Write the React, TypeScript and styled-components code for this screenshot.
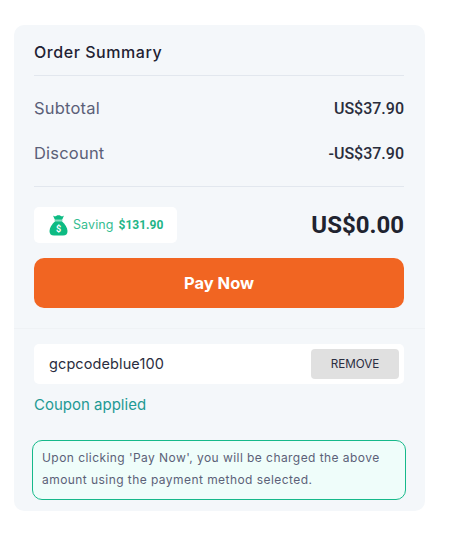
import React from "react";
import styled, { createGlobalStyle } from "styled-components";

const Global = createGlobalStyle`
  html, body { margin: 0; padding: 0; background: #fff; }
  body { font-family: "Inter", "Open Sans", sans-serif; }
`;
const sans = `"Inter", "Open Sans", sans-serif`;
const num = `"Roboto", "Liberation Sans", sans-serif`;

const Page = styled.div`
  width: 454px;
  height: 534px;
  padding: 25px 29px 0 14px;
  box-sizing: border-box;
`;
const Card = styled.section`
  width: 411px;
  height: 486px;
  box-sizing: border-box;
  background: #f4f7fa;
  border-radius: 10px;
  display: flex;
  flex-direction: column;
`;
const Top = styled.div`
  padding: 0 21px 20px 20px;
  border-bottom: 1px solid #eff2f5;
  height: 304px;
  box-sizing: border-box;
  flex: none;
`;
const Title = styled.h2`
  margin: 0;
  height: 50px;
  border-bottom: 1px solid #e2e7ee;
  font: 500 16px/55px ${sans};
  letter-spacing: 0.55px;
  color: #1f2233;
`;
const Rows = styled.div`
  height: 111px;
  padding-top: 10px;
  box-sizing: border-box;
  border-bottom: 1px solid #e2e7ee;
`;
const Row = styled.div`
  display: flex;
  justify-content: space-between;
  align-items: center;
  height: 45px;
`;
const Label = styled.span`
  margin-bottom: 2px;
  font: 400 16.5px/20px ${sans};
  letter-spacing: 0.2px;
  color: #5b6078;
`;
const Value = styled.span`
  font: 500 16px/20px ${num};
  color: #2a2d3c;
`;
const TotalRow = styled.div`
  display: flex;
  justify-content: space-between;
  align-items: center;
  margin-top: 20px;
  height: 36px;
`;
const Saving = styled.div`
  display: flex;
  align-items: center;
  width: 143px;
  height: 36px;
  box-sizing: border-box;
  padding-left: 15px;
  background: #fff;
  border-radius: 5px;
`;
const SavingLabel = styled.span`
  margin-left: 5px;
  font: 400 12.5px/16px ${sans};
  letter-spacing: 0.1px;
  color: #34bd91;
`;
const SavingValue = styled.span`
  margin-left: 5px;
  font: 700 12px/16px ${num};
  color: #1fb587;
`;
const Total = styled.span`
  font: 700 24px/30px ${num};
  color: #20232f;
`;
const PayButton = styled.button`
  display: block;
  width: 100%;
  height: 50px;
  margin-top: 15px;
  border: 0;
  border-radius: 10px;
  background: #f16522;
  color: #fff;
  font: 700 16.5px/20px ${sans};
`;
const Bottom = styled.div`
  padding: 15px 21px 0 20px;
`;
const CouponBox = styled.div`
  display: flex;
  align-items: center;
  justify-content: space-between;
  height: 40px;
  padding: 0 5px 0 15px;
  background: #fff;
  border-radius: 5px;
`;
const Code = styled.span`
  font: 400 14.5px/20px ${sans};
  letter-spacing: 0.1px;
  color: #2a2d40;
`;
const Remove = styled.button`
  width: 88px;
  height: 30px;
  border: 0;
  border-radius: 4px;
  background: #e0e0e0;
  color: #2a2d40;
  font: 400 11.7px/16px ${sans};
`;
const Applied = styled.div`
  margin-top: 11px;
  font: 400 15px/20px ${sans};
  color: #1f9a94;
`;
const Notice = styled.p`
  margin: 25px -2px 0;
  height: 60px;
  box-sizing: border-box;
  padding: 6px 9px;
  border: 1px solid #16b98a;
  border-radius: 10px;
  background: #effdfa;
  font: 400 12px/22px ${sans};
  letter-spacing: 0.44px;
  color: #5c6178;
`;

function MoneyBag() {
  return (
    <svg width="19" height="21" viewBox="0 0 18 21" aria-hidden="true">
      <path fill="#0dbb83" d="M3.5 0.5 C5 1.6 6 1.6 7 .8 C8 .2 10 .2 11 .8 C12 1.6 13 1.6 14.5 .5 L13 4 L5 4 Z" />
      <rect x="5" y="4.2" width="8" height="1.4" rx=".7" fill="#0dbb83" />
      <path fill="#0dbb83" d="M5.6 6.2 H12.4 C15.5 9 18 12.5 18 16 C18 19.2 16.5 20.5 13.5 20.5 H4.5 C1.5 20.5 0 19.2 0 16 C0 12.5 2.5 9 5.6 6.2 Z" />
      <text x="9" y="16.8" textAnchor="middle" fill="#fff" fontSize="9" fontWeight="700" fontFamily="Roboto, sans-serif">$</text>
    </svg>
  );
}

export default function App() {
  return (
    <Page>
      <Global />
      <Card>
        <Top>
          <Title>Order Summary</Title>
          <Rows>
            <Row>
              <Label>Subtotal</Label>
              <Value>US$37.90</Value>
            </Row>
            <Row>
              <Label>Discount</Label>
              <Value>-US$37.90</Value>
            </Row>
          </Rows>
          <TotalRow>
            <Saving>
              <MoneyBag />
              <SavingLabel>Saving</SavingLabel>
              <SavingValue>$131.90</SavingValue>
            </Saving>
            <Total>US$0.00</Total>
          </TotalRow>
          <PayButton>Pay Now</PayButton>
        </Top>
        <Bottom>
          <CouponBox>
            <Code>gcpcodeblue100</Code>
            <Remove>REMOVE</Remove>
          </CouponBox>
          <Applied>Coupon applied</Applied>
          <Notice>Upon clicking 'Pay Now', you will be charged the above amount using the payment method selected.</Notice>
        </Bottom>
      </Card>
    </Page>
  );
}
